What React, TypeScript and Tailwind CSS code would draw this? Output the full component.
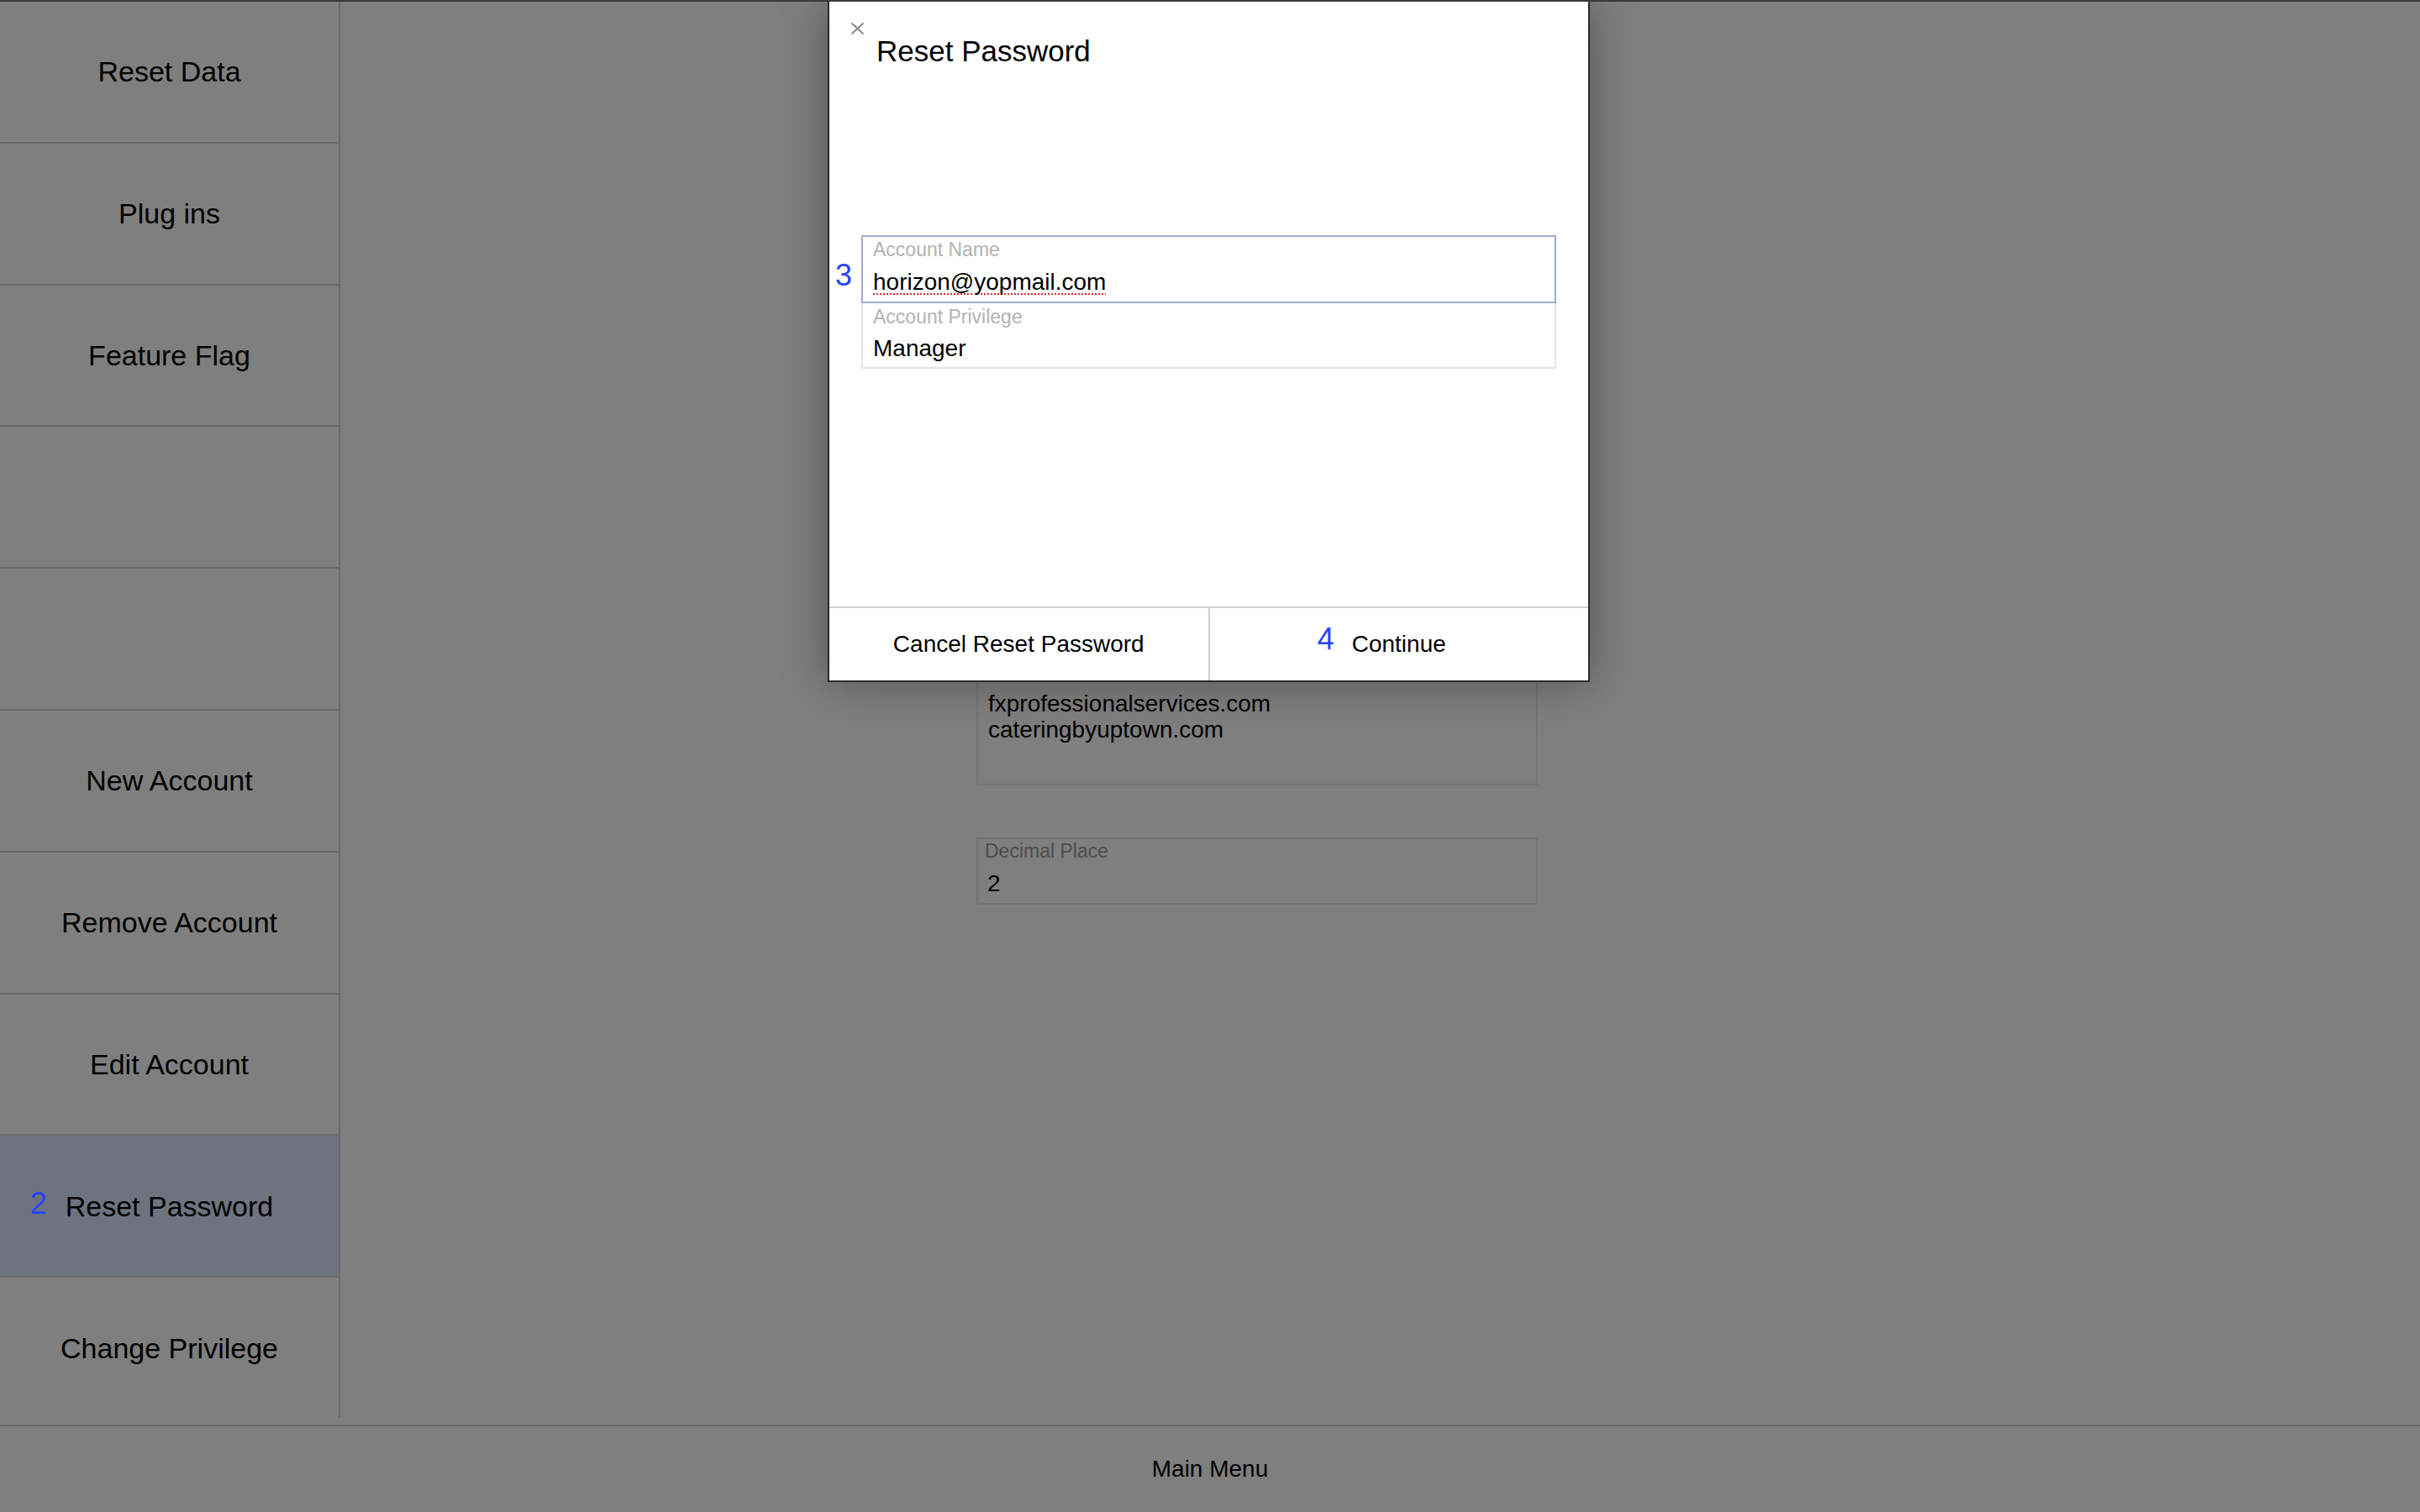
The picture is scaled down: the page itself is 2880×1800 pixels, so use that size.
import React from "react";

const NAV_ITEMS = [
  "Reset Data",
  "Plug ins",
  "Feature Flag",
  "",
  "",
  "New Account",
  "Remove Account",
  "Edit Account",
  "Reset Password",
  "Change Privilege",
];

const ACTIVE = "Reset Password";

// blue step markers drawn on top of the dimmed page
function Step({ n, className }: { n: number; className: string }) {
  return (
    <span
      className={`absolute z-30 text-[36px] leading-none text-[#2643ff] ${className}`}
    >
      {n}
    </span>
  );
}

function BgField({ label, value }: { label: string; value: string }) {
  return (
    <div className="flex h-[80px] flex-col border-2 border-[#e8e8e8] px-[8px]">
      <span className="text-[23px] leading-[28px] text-[#9a9a9a]">{label}</span>
      <span className="mt-[8px] px-[3px] text-[28px] leading-[34px]">{value}</span>
    </div>
  );
}

function Sidebar() {
  return (
    <aside className="flex h-[1686px] w-[405px] shrink-0 flex-col border-r-2 border-[#d4d4d4]">
      {NAV_ITEMS.map((item, i) => (
        <div
          key={i}
          className={`flex flex-1 items-center justify-center text-[34px] ${
            i < NAV_ITEMS.length - 1 ? "border-b-2 border-[#d4d4d4]" : ""
          } ${item === ACTIVE ? "bg-[#dee6ff]" : ""}`}
        >
          <span className="relative leading-[40px]">
            {item}
            {item === ACTIVE && <Step n={2} className="right-full top-[-1px] mr-[22px]" />}
          </span>
        </div>
      ))}
    </aside>
  );
}

function ResetPasswordModal() {
  return (
    <div className="absolute left-[985px] top-0 z-20 flex h-[810px] w-[907px] flex-col border-x-2 border-b-2 border-[#2b2b2b] bg-white shadow-[0_0_50px_rgba(0,0,0,0.35)]">
      <div className="relative flex flex-1 flex-col px-[38px]">
        <button type="button" className="absolute left-[25px] top-[24px]" aria-label="Close">
          <svg width="17" height="16" viewBox="0 0 17 16" fill="none">
            <path d="M1.5 1.5L15.5 14.5M15.5 1.5L1.5 14.5" stroke="#8c8c8c" strokeWidth="2.2" />
          </svg>
        </button>
        <h2 className="ml-[18px] pt-[38px] text-[35px] leading-[42px] font-normal">Reset Password</h2>

        <div className="mt-[198px] flex flex-col">
          <div className="relative flex flex-col border-2 border-[#9eacd0] px-[12px] pb-[6px] pt-[1px]">
            <Step n={3} className="right-full top-[28px] mr-[13px]" />
            <span className="text-[23px] leading-[28px] text-[#b3b3b3]">Account Name</span>
            <span className="mt-[8px] text-[28px] leading-[34px]">
              <span className="underline decoration-[#e02a2a] decoration-dotted decoration-2 underline-offset-[4px]">
                horizon@yopmail.com
              </span>
            </span>
          </div>
          <div className="flex flex-col border-x-2 border-b-2 border-[#e4e4e4] px-[12px] pb-[5px] pt-[2px]">
            <span className="text-[23px] leading-[28px] text-[#b3b3b3]">Account Privilege</span>
            <span className="mt-[7px] text-[28px] leading-[34px]">Manager</span>
          </div>
        </div>
      </div>

      <div className="flex h-[88px] border-t-2 border-[#cfcfcf] text-[28px]">
        <button type="button" className="flex flex-1 items-center justify-center border-r-2 border-[#cfcfcf]">
          <span className="leading-[34px]">Cancel Reset Password</span>
        </button>
        <button type="button" className="flex flex-1 items-center justify-center">
          <span className="relative leading-[34px]">
            Continue
            <Step n={4} className="right-full top-[-7px] mr-[21px]" />
          </span>
        </button>
      </div>
    </div>
  );
}

export default function App() {
  return (
    <div className="relative flex h-screen w-full flex-col overflow-hidden border-t-2 border-[#3a3a3a] bg-white font-['Liberation_Sans',Arial,sans-serif] text-black">
      <div className="flex h-[1694px] shrink-0">
        <Sidebar />
        <main className="flex-1 pl-[757px]">
          <div className="flex w-[668px] flex-col gap-[62px] pt-[222px]">
            <BgField label="Company Name" value="Horizon POS" />
            <BgField label="Company Code" value="HRZ" />
            <BgField label="Currency" value="USD" />
            <BgField label="Time Zone" value="America/New_York" />
            <div className="flex h-[143px] flex-col border-2 border-[#e8e8e8] px-[12px] pt-[28px]">
              <div className="flex flex-col text-[28px] leading-[31px]">
                <span>fxprofessionalservices.com</span>
                <span>cateringbyuptown.com</span>
              </div>
            </div>
            <BgField label="Decimal Place" value="2" />
          </div>
        </main>
      </div>
      <footer className="flex flex-1 items-center justify-center border-t-2 border-[#d4d4d4] text-[28px]">
        Main Menu
      </footer>

      <div className="absolute inset-0 z-10 bg-black/50" />
      <ResetPasswordModal />
    </div>
  );
}
